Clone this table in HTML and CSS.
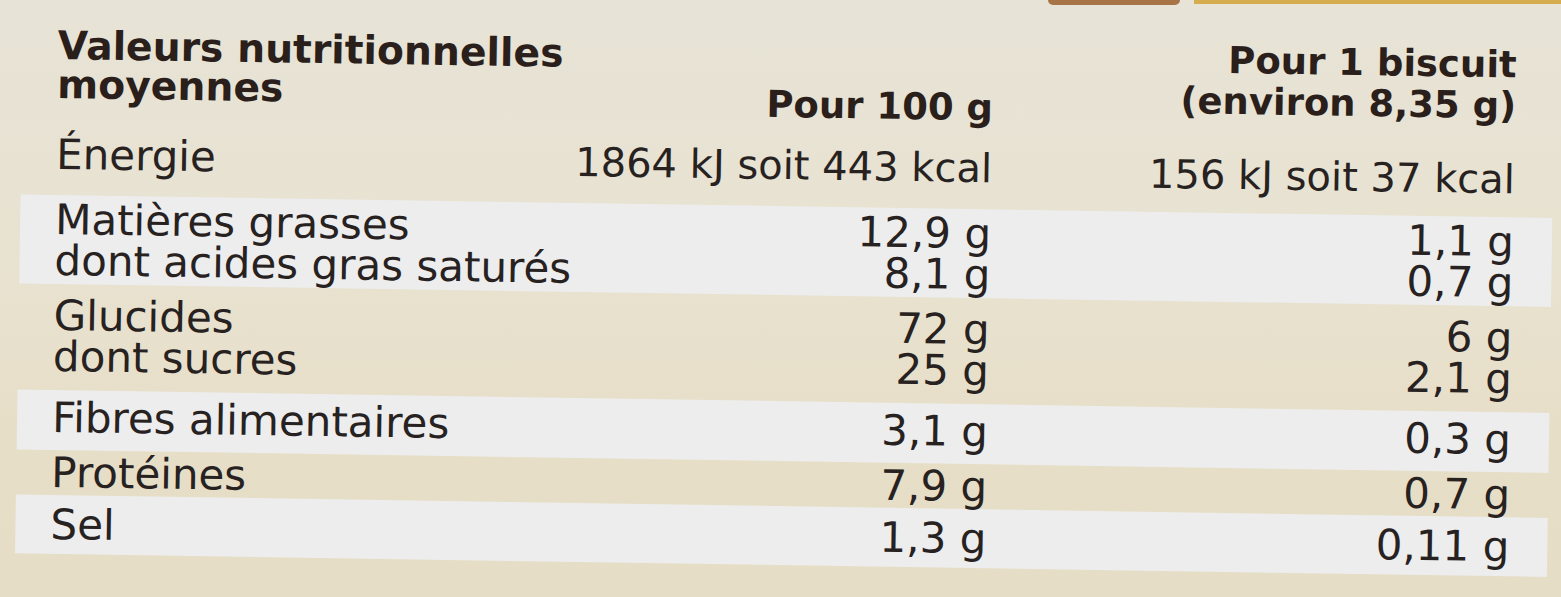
FILE: index.html
```html
<!DOCTYPE html>
<html lang="fr">
<head>
<meta charset="utf-8">
<title>Valeurs nutritionnelles</title>
<link rel="stylesheet" href="styles.css">
</head>
<body>
<div class="strip">
  <span class="strip-gap"></span>
  <span class="strip-brown"></span>
  <span class="strip-gap2"></span>
  <span class="strip-yellow"></span>
</div>
<div class="label">
  <div class="head">
    <div class="h1">Valeurs nutritionnelles<br>moyennes</div>
    <div class="h2">Pour 100 g</div>
    <div class="h3">Pour 1 biscuit<br>(environ 8,35 g)</div>
  </div>
  <div class="row energy">
    <div class="c1">Énergie</div>
    <div class="c2">1864 kJ soit 443 kcal</div>
    <div class="c3 low">156 kJ soit 37 kcal</div>
  </div>
  <div class="row band fat">
    <div class="c1">Matières grasses<br>dont acides gras saturés</div>
    <div class="c2">12,9 g<br>8,1 g</div>
    <div class="c3">1,1 g<br>0,7 g</div>
  </div>
  <div class="row carbs">
    <div class="c1">Glucides<br>dont sucres</div>
    <div class="c2">72 g<br>25 g</div>
    <div class="c3">6 g<br>2,1 g</div>
  </div>
  <div class="row band fibre">
    <div class="c1">Fibres alimentaires</div>
    <div class="c2">3,1 g</div>
    <div class="c3">0,3 g</div>
  </div>
  <div class="row protein">
    <div class="c1">Protéines</div>
    <div class="c2">7,9 g</div>
    <div class="c3">0,7 g</div>
  </div>
  <div class="row band salt">
    <div class="c1">Sel</div>
    <div class="c2">1,3 g</div>
    <div class="c3">0,11 g</div>
  </div>
</div>
</body>
</html>
```
FILE: styles.css
```css
html, body {
  margin: 0;
  padding: 0;
}
body {
  width: 1561px;
  height: 597px;
  overflow: hidden;
  background: linear-gradient(to bottom, #e7e3d6 0%, #e8e2d0 45%, #e7dec7 75%, #e6ddc6 100%);
  font-family: "DejaVu Sans", "Noto Sans", sans-serif;
  color: #27221f;
}
.strip {
  display: flex;
  align-items: flex-start;
  height: 5px;
}
.strip-gap { width: 1048px; }
.strip-brown {
  width: 132px;
  height: 5px;
  background: #a77446;
  border-radius: 0 0 40px 40px;
}
.strip-gap2 { width: 14px; }
.strip-yellow {
  flex: 1;
  height: 4px;
  background: #d5ac4e;
}
.label {
  margin-top: 19px;
  margin-left: 23px;
  width: 1532px;
  transform: rotate(0.88deg);
  transform-origin: 37px 10px;
}
.head,
.row {
  display: grid;
  grid-template-columns: minmax(0, 1fr) 440px 523px;
  padding: 0 38px 0 35px;
  white-space: nowrap;
}
.head {
  font-weight: bold;
  font-size: 38px;
  line-height: 39px;
  color: #2a1f1b;
}
.h1 {
  font-size: 39.3px;
  padding-top: 2px;
}
.h2 {
  text-align: right;
  align-self: end;
  margin-bottom: -9px;
  font-size: 37px;
}
.h3 {
  text-align: right;
  font-size: 37px;
  line-height: 41px;
  margin-top: -2px;
}
.row {
  font-size: 42px;
  line-height: 41px;
}
.c2, .c3 {
  text-align: right;
}
.band {
  background: #ecedec;
}
.energy {
  padding-top: 30px;
  padding-bottom: 17px;
}
.energy .c2,
.energy .c3 {
  font-size: 40px;
}
.low {
  padding-top: 3px;
}
.fat { padding-top: 4px; padding-bottom: 3px; }
.carbs { padding-top: 11px; padding-bottom: 13px; }
.fibre { padding-top: 7px; padding-bottom: 12px; }
.protein { padding-top: 2px; padding-bottom: 2px; }
.salt { padding-top: 9px; padding-bottom: 9px; }
```
